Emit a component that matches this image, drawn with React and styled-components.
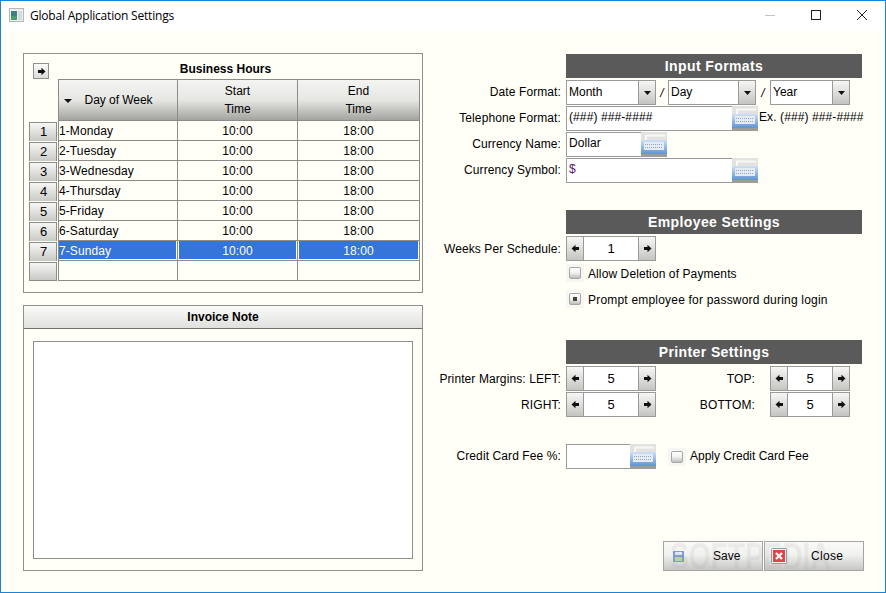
import React from "react";
import styled, { createGlobalStyle } from "styled-components";

const hours = ["1-Monday", "2-Tuesday", "3-Wednesday", "4-Thursday", "5-Friday", "6-Saturday", "7-Sunday"];

const GlobalStyle = createGlobalStyle`
  html, body {
    margin: 0;
    padding: 0;
    overflow: hidden;
    background: #fff;
  }
  * {
    box-sizing: border-box;
  }
`;

const Window = styled.div`
  width: 886px;
  height: 593px;
  display: flex;
  flex-direction: column;
  border: 1px solid #1883d7;
  font-family: "Liberation Sans", Arial, sans-serif;
  font-size: 12px;
  color: #000;
  background: #fffff8;
`;

const TitleBar = styled.div`
  height: 30px;
  flex: none;
  display: flex;
  align-items: center;
  background: #fff;
  padding: 0 0 2px 8px;
  font-family: "Open Sans", sans-serif;
  font-size: 12px;
`;

const TitleText = styled.span`
  margin-left: 6px;
  flex: 1;
  letter-spacing: -0.2px;
`;

const WinButton = styled.div`
  width: 46px;
  height: 28px;
  display: flex;
  align-items: center;
  justify-content: center;
`;

const Body = styled.div`
  flex: 1;
  display: flex;
  padding: 22px 0 21px 22px;
  min-height: 0;
`;

const LeftColumn = styled.div`
  width: 400px;
  display: flex;
  flex-direction: column;
  gap: 12px;
`;

const HoursPanel = styled.div`
  height: 240px;
  border: 1px solid #8f8f8b;
  padding: 9px 2px 0 5px;
`;

const PanelTop = styled.div`
  display: flex;
  height: 16px;
  align-items: center;
`;

const ArrowBox = styled.div`
  width: 16px;
  height: 16px;
  margin-left: 4px;
  border: 1px solid #8f8f8b;
  background: linear-gradient(#fafafa, #dcdcda);
  display: flex;
  align-items: center;
  justify-content: center;
`;

const PanelTitle = styled.div`
  flex: 1;
  text-align: center;
  font-weight: bold;
  padding-right: 18px;
  margin-top: -4px;
`;

const HoursGrid = styled.div`
  display: grid;
  grid-template-columns: 29px 120px 120px 122px;
  grid-template-rows: 42px repeat(8, 20px);
`;

const Corner = styled.div``;

const HeadCell = styled.div`
  border: 1px solid #8c8c88;
  border-left-width: ${(p) => (p.$first ? "1px" : "0")};
  background: linear-gradient(#f4f4f2, #e6e6e3 50%, #a3a3a0);
  display: flex;
  flex-direction: column;
  align-items: center;
  justify-content: center;
  line-height: 18px;
  padding-bottom: 1px;
  position: relative;
`;

const SortMark = styled.span`
  position: absolute;
  left: 5px;
  top: 19px;
  width: 0;
  height: 0;
  border: 4px solid transparent;
  border-top: 4px solid #111;
  border-bottom: 0;
`;

const DayHeading = styled.span`
  margin-right: 0;
  padding-left: 1px;
  letter-spacing: -0.05px;
`;

const RowHead = styled.div`
  margin-top: 1px;
  border: 1px solid #8c8c88;
  border-bottom-width: ${(p) => (p.$last ? "1px" : "0")};
  margin-right: 1px;
  padding: 0 0 2px 1px;
  background: linear-gradient(#f6f6f5, #c9c9c6);
  display: flex;
  align-items: center;
  justify-content: center;
  font-size: 13px;
`;

const Cell = styled.div`
  border-right: 1px solid #8c8c88;
  border-bottom: 1px solid #8c8c88;
  border-left: ${(p) => (p.$first ? "1px solid #8c8c88" : "0")};
  display: flex;
  align-items: center;
  justify-content: ${(p) => (p.$first ? "flex-start" : "center")};
  letter-spacing: 0.1px;
  background: ${(p) => (p.$selected ? "#3574d8" : "transparent")};
  color: ${(p) => (p.$selected ? "#fff" : "#000")};
  box-shadow: ${(p) =>
    !p.$selected
      ? "none"
      : p.$first
        ? "inset -1px -1px 0 #fffff8"
        : "inset -1px -1px 0 #fffff8, inset 1px 0 0 #fffff8"};
`;

const NotePanel = styled.div`
  flex: 1;
  border: 1px solid #8f8f8b;
  display: flex;
  flex-direction: column;
`;

const NoteHeader = styled.div`
  height: 23px;
  flex: none;
  border-bottom: 1px solid #6f6f6c;
  background: linear-gradient(#fbfbfb, #e0e0de);
  text-align: center;
  font-weight: bold;
  line-height: 22px;
`;

const NoteArea = styled.textarea`
  display: block;
  width: 380px;
  height: 218px;
  margin: 12px 0 0 9px;
  border: 1px solid #8f8f8b;
  background: #fff;
  resize: none;
  outline: none;
`;

const RightColumn = styled.div`
  width: 434px;
  margin-left: 7px;
  padding-top: 1px;
  display: flex;
  flex-direction: column;
`;

const SectionBar = styled.div`
  width: 296px;
  height: 24px;
  margin: ${(p) => p.$top || 0}px 0 2px 136px;
  background: #5a5a5a;
  color: #fff;
  font-size: 14px;
  font-weight: bold;
  letter-spacing: 0.4px;
  text-align: center;
  line-height: 25px;
`;

const FormRow = styled.div`
  display: flex;
  align-items: center;
  height: 25px;
  margin-bottom: 1px;
  margin-top: ${(p) => p.$top || 0}px;
`;

const Label = styled.div`
  width: ${(p) => p.$width || 131}px;
  flex: none;
  text-align: right;
  margin-right: ${(p) => p.$gap || 5}px;
  padding-bottom: ${(p) => (p.$raise ? 2 : 0)}px;
  letter-spacing: 0.1px;
`;

const Combo = styled.div`
  width: ${(p) => p.$width}px;
  height: 25px;
  display: flex;
  border: 1px solid #9a9a9a;
  background: #fff;
`;

const ComboText = styled.div`
  flex: 1;
  padding-left: 2px;
  line-height: 22px;
`;

const SideButton = styled.div`
  width: 17px;
  flex: none;
  background: linear-gradient(#f7f7f5, #c4c4c1);
  border-left: ${(p) => (p.$side === "left" ? "0" : "1px solid #9a9a9a")};
  border-right: ${(p) => (p.$side === "left" ? "1px solid #9a9a9a" : "0")};
  display: flex;
  align-items: center;
  justify-content: center;
`;

const Slash = styled.span`
  width: ${(p) => p.$width}px;
  text-align: center;
  font-style: italic;
`;

const TextBox = styled.div`
  width: ${(p) => p.$width}px;
  height: 25px;
  display: flex;
  border: 1px solid #9a9a9a;
  background: #fff;
`;

const TextValue = styled.div`
  flex: 1;
  padding-left: 2px;
  line-height: 21px;
  letter-spacing: 0.1px;
  color: ${(p) => p.$color || "#000"};
`;

const KeyboardSlot = styled.svg`
  display: block;
  flex: none;
  width: 26px;
  height: 25px;
  margin: -1px -1px -1px 0;
`;

const Hint = styled.span`
  margin-left: 1px;
  padding-bottom: 3px;
  letter-spacing: 0.1px;
`;

const Spinner = styled.div`
  width: ${(p) => p.$width || 90}px;
  height: 25px;
  display: flex;
  border: 1px solid #9a9a9a;
  background: #fff;
`;

const SpinValue = styled.div`
  flex: 1;
  text-align: center;
  line-height: 23px;
  font-size: 13px;
`;

const CheckRow = styled.div`
  display: flex;
  align-items: center;
  height: 18px;
  margin: ${(p) => p.$top || 0}px 0 0 ${(p) => p.$left || 136}px;
`;

const CheckBox = styled.div`
  width: 18px;
  height: 18px;
  flex: none;
  margin-right: 4px;
  background: #f6f6f2;
  display: flex;
  align-items: center;
  justify-content: center;
`;

const CheckFace = styled.div`
  width: 12px;
  height: 12px;
  border: 1px solid #a6a6a6;
  border-radius: 2px;
  background: linear-gradient(#fff, #f0f0f0 50%, #bdbdbd);
  display: flex;
  align-items: center;
  justify-content: center;
  &::after {
    content: "";
    display: ${(p) => (p.$checked ? "block" : "none")};
    width: 4px;
    height: 4px;
    background: #444;
  }
`;

const CheckLabel = styled.span`
  letter-spacing: ${(p) => p.$spacing ?? 0.1}px;
  padding-top: ${(p) => p.$down || 0}px;
  padding-bottom: ${(p) => p.$up || 0}px;
`;

const Footer = styled.div`
  margin-top: auto;
  margin-left: 233px;
  display: flex;
  gap: 1px;
  position: relative;
`;

const ActionButton = styled.div`
  width: 100px;
  height: 30px;
  border: 1px solid #a5a5a5;
  background: linear-gradient(#fafaf8, #f1f1ef 45%, #c6c6c3);
  display: flex;
  align-items: center;
  padding-left: ${(p) => p.$pad}px;
`;

const ButtonText = styled.span`
  margin-left: ${(p) => p.$gap}px;
  letter-spacing: ${(p) => p.$spacing || 0}px;
`;

const Watermark = styled.div`
  position: absolute;
  left: 7px;
  top: -2px;
  font-size: 36px;
  line-height: 36px;
  font-weight: bold;
  white-space: nowrap;
  color: rgba(150, 150, 145, 0.13);
  transform: scaleX(0.78);
  transform-origin: left center;
  pointer-events: none;
`;

const Arrow = ({ dir = "right" }) => (
  <svg width="9" height="9" viewBox="0 0 9 9" style={{ transform: dir === "left" ? "scaleX(-1)" : "none" }}>
    <path d="M1 3H4.5V0.8L8.5 4.5L4.5 8.2V6H1Z" fill="#111" />
  </svg>
);

const ComboArrow = () => (
  <svg width="7" height="4" viewBox="0 0 7 4">
    <path d="M0 0H7L3.5 4Z" fill="#111" />
  </svg>
);

const Keyboard = ({ id }) => (
  <KeyboardSlot viewBox="0 0 26 25">
    <defs>
      <linearGradient id={id} x1="0" y1="0" x2="0" y2="1">
        <stop offset="0" stopColor="#cfe0f5" />
        <stop offset="1" stopColor="#5f93d6" />
      </linearGradient>
    </defs>
    <rect width="26" height="25" fill="#d4d4d1" />
    <rect x="0" y="0" width="26" height="8" fill="#e2e2df" />
    <path d="M5 8V3.5H24" stroke="#f8f8f6" strokeWidth="2" fill="none" />
    <rect x="0" y="8" width="26" height="14" fill={`url(#${id})`} />
    <rect x="3" y="10" width="20" height="8" fill="#e6ebf2" />
    <path d="M4 12.5H22M4 15.5H22" stroke="#8fa6c4" strokeWidth="1" strokeDasharray="1 1" />
    <rect x="0" y="22" width="26" height="3" fill="#9c9c98" />
  </KeyboardSlot>
);

const NumSpinner = ({ value, width }) => (
  <Spinner $width={width}>
    <SideButton $side="left">
      <Arrow dir="left" />
    </SideButton>
    <SpinValue>{value}</SpinValue>
    <SideButton>
      <Arrow />
    </SideButton>
  </Spinner>
);

const Dropdown = ({ value, width }) => (
  <Combo $width={width}>
    <ComboText>{value}</ComboText>
    <SideButton>
      <ComboArrow />
    </SideButton>
  </Combo>
);

const App = () => {
  return (
    <Window>
      <GlobalStyle />
      <TitleBar>
        <svg width="15" height="14" viewBox="0 0 15 14">
          <rect x="0.5" y="0.5" width="14" height="13" fill="#eef0f0" stroke="#b4b8b8" />
          <rect x="2" y="3" width="6" height="9" fill="#3f7f86" />
          <rect x="2" y="8" width="6" height="4" fill="#4d9a76" />
          <rect x="9" y="3" width="4" height="9" fill="#d5dbdc" />
        </svg>
        <TitleText>Global Application Settings</TitleText>
        <WinButton>
          <svg width="10" height="10" viewBox="0 0 10 10">
            <path d="M0 5.5H10" stroke="#c4c4c4" />
          </svg>
        </WinButton>
        <WinButton>
          <svg width="10" height="10" viewBox="0 0 10 10">
            <rect x="0.5" y="0.5" width="9" height="9" fill="none" stroke="#222" />
          </svg>
        </WinButton>
        <WinButton>
          <svg width="10" height="10" viewBox="0 0 10 10">
            <path d="M0 0L10 10M10 0L0 10" stroke="#222" />
          </svg>
        </WinButton>
      </TitleBar>
      <Body>
        <LeftColumn>
          <HoursPanel>
            <PanelTop>
              <ArrowBox>
                <Arrow />
              </ArrowBox>
              <PanelTitle>Business Hours</PanelTitle>
            </PanelTop>
            <HoursGrid>
              <Corner />
              <HeadCell $first>
                <SortMark />
                <DayHeading>Day of Week</DayHeading>
              </HeadCell>
              <HeadCell>
                <span>Start</span>
                <span>Time</span>
              </HeadCell>
              <HeadCell>
                <span>End</span>
                <span>Time</span>
              </HeadCell>
              {hours.map((day, i) => (
                <React.Fragment key={day}>
                  <RowHead>{i + 1}</RowHead>
                  <Cell $first $selected={i === 6}>{day}</Cell>
                  <Cell $selected={i === 6}>10:00</Cell>
                  <Cell $selected={i === 6}>18:00</Cell>
                </React.Fragment>
              ))}
              <RowHead $last />
              <Cell $first />
              <Cell />
              <Cell />
            </HoursGrid>
          </HoursPanel>
          <NotePanel>
            <NoteHeader>Invoice Note</NoteHeader>
            <NoteArea />
          </NotePanel>
        </LeftColumn>
        <RightColumn>
          <SectionBar>Input Formats</SectionBar>
          <FormRow>
            <Label $raise>Date Format:</Label>
            <Dropdown value="Month" width={90} />
            <Slash $width={12}>/</Slash>
            <Dropdown value="Day" width={88} />
            <Slash $width={14}>/</Slash>
            <Dropdown value="Year" width={80} />
          </FormRow>
          <FormRow>
            <Label $raise>Telephone Format:</Label>
            <TextBox $width={192}>
              <TextValue>(###) ###-####</TextValue>
              <Keyboard id="kb1" />
            </TextBox>
            <Hint>Ex. (###) ###-####</Hint>
          </FormRow>
          <FormRow>
            <Label $raise>Currency Name:</Label>
            <TextBox $width={101}>
              <TextValue>Dollar</TextValue>
              <Keyboard id="kb2" />
            </TextBox>
          </FormRow>
          <FormRow>
            <Label $raise>Currency Symbol:</Label>
            <TextBox $width={192}>
              <TextValue $color="#5a1a6a">$</TextValue>
              <Keyboard id="kb3" />
            </TextBox>
          </FormRow>

          <SectionBar $top={26}>Employee Settings</SectionBar>
          <FormRow>
            <Label>Weeks Per Schedule:</Label>
            <NumSpinner value="1" />
          </FormRow>
          <CheckRow $top={2}>
            <CheckBox>
              <CheckFace />
            </CheckBox>
            <CheckLabel $down={2}>Allow Deletion of Payments</CheckLabel>
          </CheckRow>
          <CheckRow $top={8}>
            <CheckBox>
              <CheckFace $checked />
            </CheckBox>
            <CheckLabel $down={2} $spacing={0.2}>Prompt employee for password during login</CheckLabel>
          </CheckRow>

          <SectionBar $top={32}>Printer Settings</SectionBar>
          <FormRow>
            <Label>Printer Margins: LEFT:</Label>
            <NumSpinner value="5" />
            <Label $width={99} $gap={15}>TOP:</Label>
            <NumSpinner value="5" width={80} />
          </FormRow>
          <FormRow>
            <Label>RIGHT:</Label>
            <NumSpinner value="5" />
            <Label $width={99} $gap={15}>BOTTOM:</Label>
            <NumSpinner value="5" width={80} />
          </FormRow>

          <FormRow $top={26}>
            <Label $raise>Credit Card Fee %:</Label>
            <TextBox $width={90}>
              <TextValue />
              <Keyboard id="kb4" />
            </TextBox>
            <CheckRow $left={12}>
              <CheckBox>
                <CheckFace />
              </CheckBox>
              <CheckLabel $up={2} $spacing={0}>Apply Credit Card Fee</CheckLabel>
            </CheckRow>
          </FormRow>

          <Footer>
            <ActionButton $pad={9}>
              <svg width="11" height="11" viewBox="0 0 11 11">
                <rect width="11" height="11" fill="#7f9cd8" />
                <rect x="2" y="1" width="7" height="3" fill="#e6ecf6" />
                <rect x="2" y="6" width="7" height="4" fill="#b7d59a" />
              </svg>
              <ButtonText $gap={29}>Save</ButtonText>
            </ActionButton>
            <ActionButton $pad={6}>
              <svg width="16" height="16" viewBox="0 0 16 16">
                <rect x="0.5" y="0.5" width="15" height="15" rx="1" fill="#f3f3f1" stroke="#9a9a98" />
                <rect x="2" y="2" width="12" height="12" fill="#d9474c" />
                <path d="M5 5L11 11M11 5L5 11" stroke="#fff" strokeWidth="2.2" />
              </svg>
              <ButtonText $gap={24} $spacing={0.3}>Close</ButtonText>
            </ActionButton>
            <Watermark>SOFTPEDIA</Watermark>
          </Footer>
        </RightColumn>
      </Body>
    </Window>
  );
};

export default App;
